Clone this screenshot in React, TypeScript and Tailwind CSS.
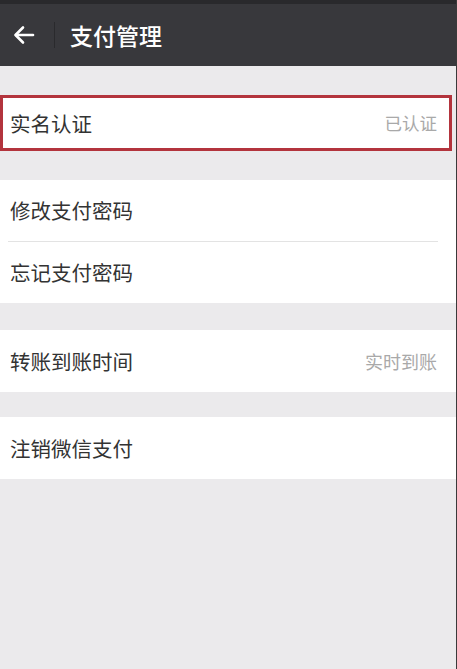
import React from "react";

const font = { fontFamily: '"Noto Sans CJK SC", "Noto Sans", sans-serif' };

function Row({ label, value, className = "" }: { label: string; value?: string; className?: string }) {
  return (
    <div className={`flex items-center justify-between bg-white pl-[10px] pr-[20px] ${className}`}>
      <span className="text-[20.5px] leading-none text-[#333333]">{label}</span>
      {value && <span className="text-[18px] leading-none text-[#a9a9a9]">{value}</span>}
    </div>
  );
}

export default function App() {
  return (
    <div style={font} className="relative flex h-[669px] w-[457px] flex-col overflow-hidden bg-[#ebeaec]">
      <div className="h-[4px] bg-[#29292c]" />
      <div className="flex h-[62px] items-center bg-[#38383c]">
        <div className="flex w-[54px] items-center justify-center">
          <svg width="22" height="20" viewBox="0 0 22 20" fill="none" stroke="#ffffff" strokeWidth="2.6" strokeLinecap="round" strokeLinejoin="round" className="-ml-[7px]">
            <path d="M20 10H3" />
            <path d="M10 2.5L2.5 10L10 17.5" />
          </svg>
        </div>
        <div className="h-[26px] w-[1px] bg-[#2a2a2d]" />
        <span className="ml-[15px] text-[23px] font-medium leading-none text-white">支付管理</span>
      </div>

      <div className="h-[29px]" />
      <div className="flex h-[56px] w-[452px] items-center justify-between border-[3px] border-[#b3343d] bg-white pl-[7px] pr-[12px]">
        <span className="text-[20.5px] leading-none text-[#333333]">实名认证</span>
        <span className="text-[17.5px] leading-none text-[#a9a9a9]">已认证</span>
      </div>

      <div className="h-[29px]" />
      <div className="flex flex-col bg-white">
        <Row label="修改支付密码" className="h-[61px]" />
        <div className="ml-[8px] mr-[19px] h-[1px] bg-[#e3e3e3]" />
        <Row label="忘记支付密码" className="h-[61px]" />
      </div>

      <div className="h-[27px]" />
      <Row label="转账到账时间" value="实时到账" className="h-[62px]" />

      <div className="h-[25px]" />
      <Row label="注销微信支付" className="h-[62px]" />

      <div className="absolute right-0 top-0 h-full w-[1px] bg-[#3a3a3a]" />
    </div>
  );
}
